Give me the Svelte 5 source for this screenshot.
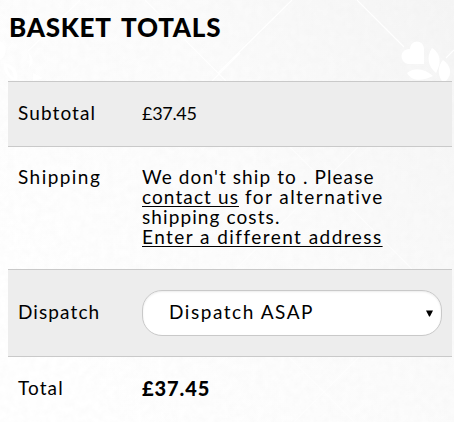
<script lang="ts">
	const amount = '£37.45';
	const options = ['Dispatch ASAP'];

	let dispatch = $state(options[0]);
</script>

<div class="page">
	<svg class="pattern" viewBox="0 0 454 422" aria-hidden="true">
		<defs>
			<linearGradient id="shade" x1="0" y1="0.6" x2="1" y2="0">
				<stop offset="0" stop-color="#ffffff" />
				<stop offset="0.5" stop-color="#fcfcfc" />
				<stop offset="1" stop-color="#f5f5f5" />
			</linearGradient>
			<filter id="grain" x="0" y="0" width="100%" height="100%">
				<feTurbulence type="fractalNoise" baseFrequency="0.14" numOctaves="3" seed="4" />
				<feColorMatrix values="0 0 0 0 0.78  0 0 0 0 0.78  0 0 0 0 0.78  0.22 0 0 0 -0.06" />
			</filter>
		</defs>
		<rect width="454" height="422" fill="url(#shade)" />
		<rect width="454" height="422" filter="url(#grain)" />
		<g fill="none" stroke="#fff" stroke-width="1.1">
			<path d="M80 0 28 51M145 0l73 73 74-73M218 73l8 8M240 53l-28 28M357 0l47 47M454 50l-8 8" />
			<path d="M290 147l122 122M358 147 236 269M288 356l66 66M360 356l-66 66" stroke-opacity="0.6" />
		</g>
		<g fill="#fff">
			<path d="M424 64V48a7 7 0 0 0-14 1 7.500 7.500 0 0 0-2 15z" />
			<path d="M432 48c7 4 11 13 4 25-8-7-10-16-4-25zM407 73c7-6 17-5 26 3-10 5-21 6-26-3zM443 60c8 6 10 14 3 21h-4c-5-7-4-15 1-21z" />
			<path d="M0 41c5 2 7 7 5 13-1 3-3 5-5 6zM28 52c6 5 6 11 1 16 1-6 1-11-1-16zM33 73l10 5-10 3z" />
			<path fill-rule="evenodd" d="M4 63c9 1 15 8 13 17h-5c-6-5-9-10-8-17zM7 67c1 5 3 8 7 11 0-6-3-9-7-11z" />
		</g>
	</svg>

	<h2>BASKET TOTALS</h2>

	<div class="totals">
		<div class="row subtotal">
			<div class="label">Subtotal</div>
			<div class="price">{amount}</div>
		</div>
		<div class="row shipping">
			<div class="label wide">Shipping</div>
			<p>
				We don't ship to . Please<br />
				<a href="#contact">contact us</a> <span class="wide">for alternative</span><br />
				shipping costs.<br />
				<a class="wide" href="#address">Enter a different address</a>
			</p>
		</div>
		<div class="row dispatch">
			<label class="label" for="dispatch">Dispatch</label>
			<div class="select">
				<select id="dispatch" bind:value={dispatch}>
					{#each options as option}
						<option value={option}>{option}</option>
					{/each}
				</select>
				<svg class="arrow" viewBox="0 0 8 7" aria-hidden="true"><path d="M0 0h8L4.500 7h-1z" /></svg>
			</div>
		</div>
		<div class="row total">
			<div class="label">Total</div>
			<strong>{amount}</strong>
		</div>
	</div>
</div>

<style>
	:global(body) {
		margin: 0;
		background: #fafafa;
	}

	.page {
		position: relative;
		box-sizing: border-box;
		width: 454px;
		height: 422px;
		padding: 11px 2px 0 8px;
		overflow: hidden;
		font-family: Lato, 'Liberation Sans', sans-serif;
		font-size: 19px;
		line-height: 20px;
		color: #000;
	}

	.pattern {
		position: absolute;
		inset: 0;
		width: 454px;
		height: 422px;
		z-index: -1;
	}

	h2 {
		margin: 0 0 38px 1px;
		font-size: 26px;
		font-weight: 900;
		line-height: 32px;
		letter-spacing: 0.75px;
		word-spacing: 4px;
		white-space: nowrap;
	}

	.row {
		box-sizing: border-box;
		display: grid;
		grid-template-columns: 124px 300px;
		align-items: center;
		padding: 0 10px;
		border-top: 1px solid #c9c9c9;
		white-space: nowrap;
	}

	.subtotal {
		height: 65px;
		padding-bottom: 3px;
		background: #ededed;
	}

	.shipping {
		height: 123px;
		align-items: start;
		padding-top: 20px;
	}

	.dispatch {
		height: 87px;
		background: #ededed;
	}

	.total {
		height: 66px;
		padding-bottom: 4px;
	}

	.label {
		letter-spacing: 1.1px;
	}

	.dispatch .label {
		padding-bottom: 2px;
	}

	p {
		margin: 0;
		letter-spacing: 1.1px;
	}

	a {
		color: inherit;
		text-underline-offset: 2px;
		text-decoration-thickness: 1px;
		text-decoration-skip-ink: none;
	}

	.wide {
		letter-spacing: 1.45px;
	}

	.price {
		font-size: 18px;
		letter-spacing: -0.3px;
	}

	strong {
		font-size: 20px;
		font-weight: 900;
		letter-spacing: 0.9px;
	}

	.select {
		position: relative;
	}

	select {
		display: block;
		box-sizing: border-box;
		width: 300px;
		height: 46px;
		padding: 0 26px 2px;
		border: 1px solid #c9c9c9;
		border-radius: 20px;
		appearance: none;
		background: #fff;
		box-shadow: inset 0 1px 2px rgba(0, 0, 0, 0.08);
		color: #000;
		font: inherit;
		letter-spacing: 1.55px;
	}

	.arrow {
		position: absolute;
		top: 20px;
		right: 9px;
		width: 7px;
		height: 7px;
	}
</style>
